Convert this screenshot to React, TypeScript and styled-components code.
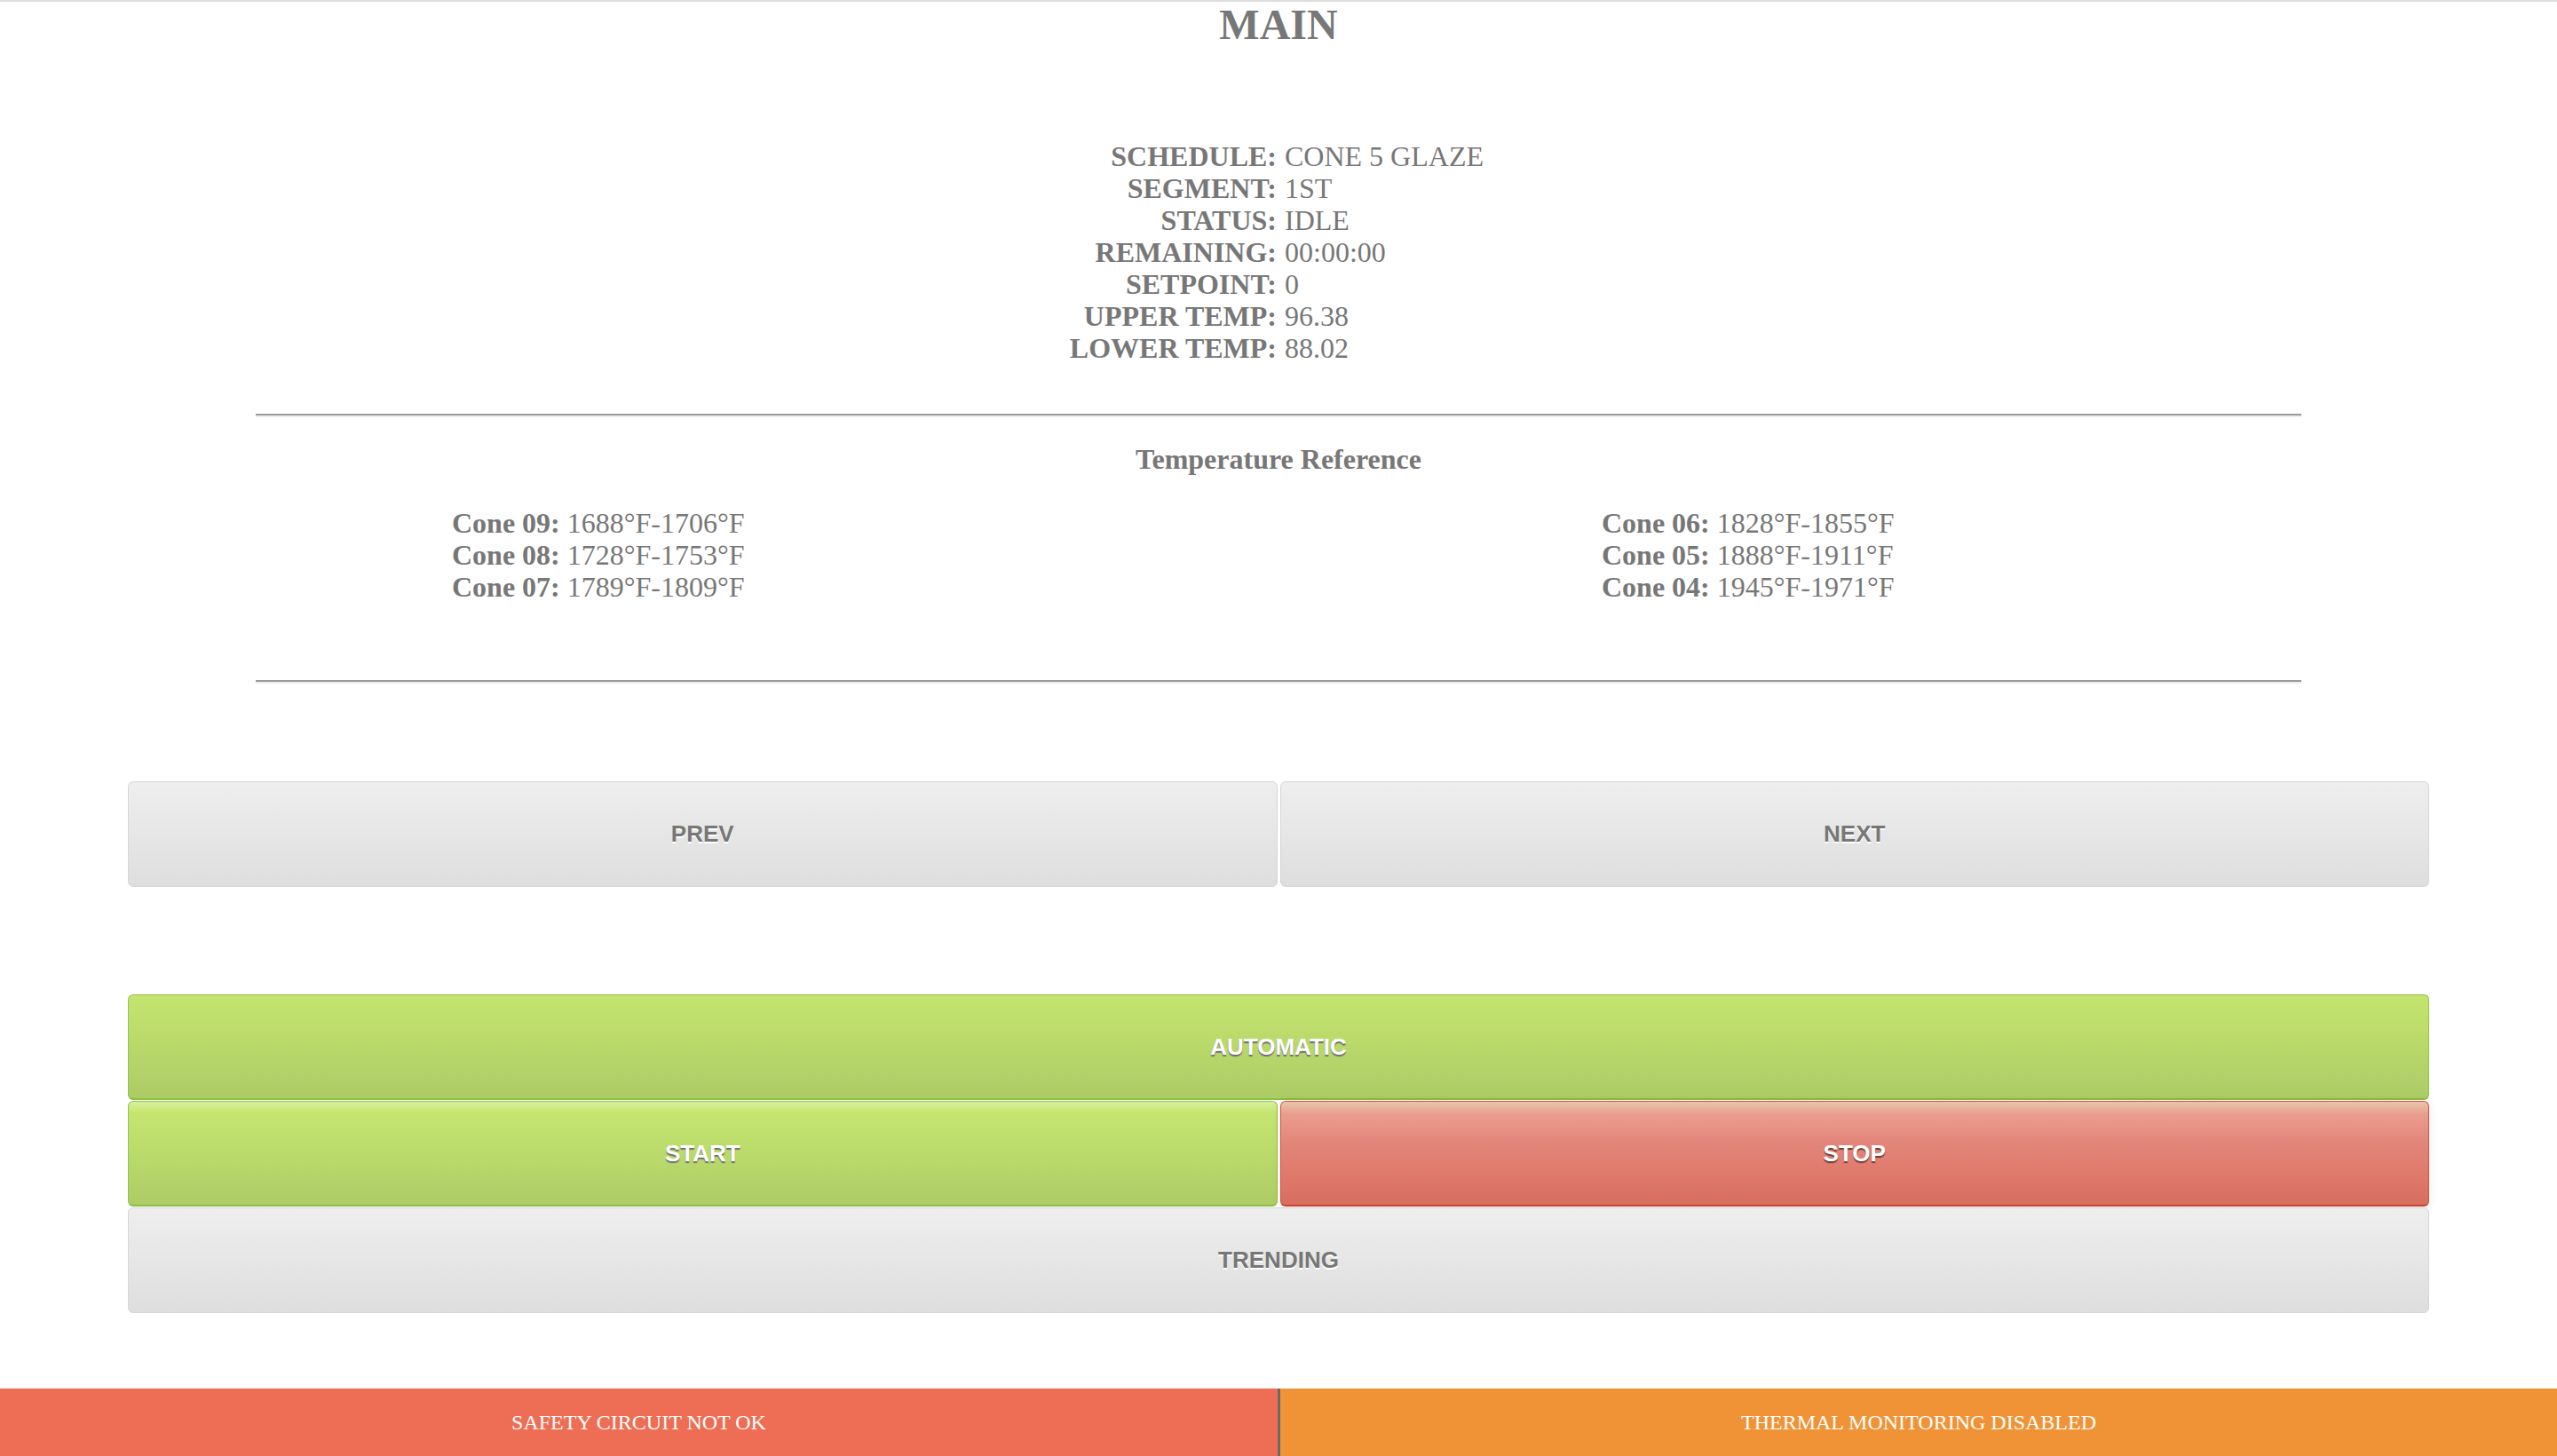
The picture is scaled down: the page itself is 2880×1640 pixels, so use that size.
import React from "react";
import styled, { createGlobalStyle, css } from "styled-components";

const GlobalStyle = createGlobalStyle`
  html, body {
    margin: 0;
    padding: 0;
    background: #ffffff;
  }
  body {
    font-family: "Liberation Serif", "Times New Roman", serif;
    color: #777777;
  }
  * { box-sizing: border-box; }
`;

const Page = styled.div`
  min-height: 1640px;
  display: flex;
  flex-direction: column;
  border-top: 2px solid #dddddd;
`;

const Title = styled.h1`
  margin: 0;
  font-size: 48px;
  line-height: 52px;
  font-weight: bold;
  text-align: center;
  color: #777777;
`;

const InfoGrid = styled.div`
  margin-top: 104px;
  display: grid;
  grid-template-columns: 1fr 1fr;
  font-size: 32px;
  line-height: 36px;
`;

const InfoLabel = styled.div`
  text-align: right;
  font-weight: bold;
  padding-right: 2px;
`;

const InfoValue = styled.div`
  text-align: left;
  padding-left: 7px;
`;

const Rule = styled.hr<{ $top: number }>`
  width: 80%;
  height: 0;
  margin: ${(p) => p.$top}px auto 0;
  border: 0;
  border-top: 2px solid #9b9b9b;
  border-bottom: 2px solid #eeeeee;
`;

const SectionTitle = styled.div`
  margin-top: 29px;
  font-size: 32px;
  line-height: 36px;
  font-weight: bold;
  text-align: center;
`;

const ConeGrid = styled.div`
  width: 80%;
  margin: 36px auto 0;
  padding-left: 221px;
  display: grid;
  grid-template-columns: 1295px 1fr;
  font-size: 32px;
  line-height: 36px;
`;

const ConeColumn = styled.div`
  display: flex;
  flex-direction: column;
`;

const ConeRow = styled.div`
  white-space: nowrap;
`;

const ConeName = styled.span`
  font-weight: bold;
`;

const Controls = styled.div`
  width: 90%;
  margin: 110px auto 0;
  display: flex;
  flex-direction: column;
`;

const Pair = styled.div`
  display: grid;
  grid-template-columns: 1fr 1fr;
  column-gap: 3px;
`;

type Variant = "gray" | "green" | "red";

const variants = {
  gray: css`
    background: linear-gradient(to bottom, #eeeeee 0%, #e6e6e6 50%, #dedede 100%);
    border: 1px solid #d6d6d6;
    color: #777777;
    text-shadow: 0 2px 0 #ffffff;
  `,
  green: css`
    background: linear-gradient(to bottom, #c4e46f 0%, #b9d86a 50%, #adcb66 100%);
    border: 1px solid #92c446;
    border-bottom: 2px solid #8bbf3f;
    color: #ffffff;
    text-shadow: 0 2px 1px #6e6e6e;
  `,
  red: css`
    background: linear-gradient(to bottom, #e6c7ab 0%, #e99d8d 12%, #e3857a 40%, #de7a6c 70%, #d76e60 100%);
    border: 1px solid #cf5541;
    border-bottom: 2px solid #c84431;
    color: #ffffff;
    text-shadow: 0 2px 1px #6e3a33;
    box-shadow: 0 0 12px rgba(0, 0, 0, 0.08);
  `,
};

const Button = styled.button<{ $variant: Variant; $pressed?: boolean; $gap?: number }>`
  display: flex;
  align-items: center;
  justify-content: center;
  height: 119px;
  margin: ${(p) => p.$gap ?? 0}px 0 1px;
  padding: 0;
  border-radius: 6px;
  font-family: "Liberation Sans", Arial, sans-serif;
  font-size: 26px;
  font-weight: bold;
  letter-spacing: 0;
  cursor: pointer;
  ${(p) => variants[p.$variant]}
  ${(p) =>
    p.$pressed &&
    css`
      background: linear-gradient(to bottom, #d6f0a0 0%, #c6e570 10%, #badb6b 50%, #adcb66 100%);
    `}
`;

const Footer = styled.div`
  margin-top: auto;
  display: grid;
  grid-template-columns: 1442px 1fr;
  height: 76px;
`;

const Alert = styled.div<{ $tone: "red" | "orange" }>`
  display: flex;
  align-items: center;
  justify-content: center;
  font-family: "Liberation Serif", "Times New Roman", serif;
  font-size: 24px;
  color: #ffffff;
  background: ${(p) => (p.$tone === "red" ? "#ed6e54" : "#f09336")};
  ${(p) => p.$tone === "red" && css`border-right: 3px solid #6a6a6a;`}
`;

const info: [string, string][] = [
  ["SCHEDULE:", "CONE 5 GLAZE"],
  ["SEGMENT:", "1ST"],
  ["STATUS:", "IDLE"],
  ["REMAINING:", "00:00:00"],
  ["SETPOINT:", "0"],
  ["UPPER TEMP:", "96.38"],
  ["LOWER TEMP:", "88.02"],
];

const conesLeft: [string, string][] = [
  ["Cone 09:", "1688°F-1706°F"],
  ["Cone 08:", "1728°F-1753°F"],
  ["Cone 07:", "1789°F-1809°F"],
];

const conesRight: [string, string][] = [
  ["Cone 06:", "1828°F-1855°F"],
  ["Cone 05:", "1888°F-1911°F"],
  ["Cone 04:", "1945°F-1971°F"],
];

const Cones = ({ rows }: { rows: [string, string][] }) => (
  <ConeColumn>
    {rows.map(([n, v]) => (
      <ConeRow key={n}>
        <ConeName>{n}</ConeName> {v}
      </ConeRow>
    ))}
  </ConeColumn>
);

export default function App() {
  return (
    <Page>
      <GlobalStyle />
      <Title>MAIN</Title>
      <InfoGrid>
        {info.map(([l, v]) => (
          <React.Fragment key={l}>
            <InfoLabel>{l}</InfoLabel>
            <InfoValue>{v}</InfoValue>
          </React.Fragment>
        ))}
      </InfoGrid>
      <Rule $top={56} />
      <SectionTitle>Temperature Reference</SectionTitle>
      <ConeGrid>
        <Cones rows={conesLeft} />
        <Cones rows={conesRight} />
      </ConeGrid>
      <Rule $top={87} />
      <Controls>
        <Pair>
          <Button $variant="gray">PREV</Button>
          <Button $variant="gray">NEXT</Button>
        </Pair>
        <Button $variant="green" $gap={120}>AUTOMATIC</Button>
        <Pair>
          <Button $variant="green" $pressed>START</Button>
          <Button $variant="red">STOP</Button>
        </Pair>
        <Button $variant="gray">TRENDING</Button>
      </Controls>
      <Footer>
        <Alert $tone="red">SAFETY CIRCUIT NOT OK</Alert>
        <Alert $tone="orange">THERMAL MONITORING DISABLED</Alert>
      </Footer>
    </Page>
  );
}
